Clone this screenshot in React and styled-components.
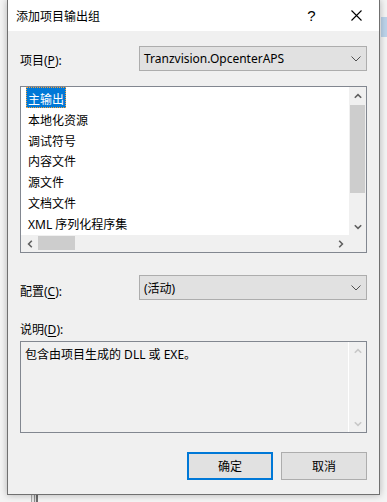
import React from 'react';
import styled, { createGlobalStyle } from 'styled-components';

const Global = createGlobalStyle`
    html, body {
        margin: 0;
        padding: 0;
    }
    body {
        overflow: hidden;
        background: #f4f4f4;
        font-family: "Segoe UI", "Noto Sans", "Noto Sans CJK SC", sans-serif;
        font-size: 12px;
        color: #000;
    }
`;

const Desktop = styled.div`
    width: 387px;
    height: 502px;
    overflow: hidden;
    display: flex;
    align-items: flex-start;
    background:
        linear-gradient(#bcd3ea, #bcd3ea) 381px 17px / 6px 20px no-repeat,
        linear-gradient(90deg, #a8a8a8 0 1px, #e6e6e6 1px 3px, #8c8c8c 3px 4px, #dadada 4px 5px, #6c6c6c 5px 7px) 31px 495px / 7px 7px no-repeat,
        #f4f4f4;
`;

const Dialog = styled.div`
    margin-left: 7px;
    width: 373px;
    height: 495px;
    box-sizing: border-box;
    border: 1px solid #707070;
    border-top: none;
    background: #f0f0f0;
    box-shadow: 0 0 7px rgba(0, 0, 0, 0.28);
    display: flex;
    flex-direction: column;
`;

const TitleBar = styled.div`
    height: 31px;
    flex-shrink: 0;
    background: #fff;
    display: flex;
    align-items: center;
    padding-left: 8px;
`;

const Title = styled.div`
    flex: 1;
    font-size: 12px;
`;

const CaptionButton = styled.div`
    width: 46px;
    height: 31px;
    display: flex;
    align-items: center;
    justify-content: center;
    font-size: 15px;
    font-family: "Segoe UI", "Liberation Sans", sans-serif;
    padding-left: ${p => p.$nudge || 0}px;
    box-sizing: border-box;
`;

const Body = styled.div`
    flex: 1;
    display: flex;
    flex-direction: column;
    padding: 15px 12px 14px 12px;
`;

const FieldRow = styled.div`
    display: flex;
    align-items: center;
    height: 25px;
    margin-top: ${p => p.$top || 0}px;
`;

const Label = styled.div`
    width: 119px;
    padding-top: ${p => p.$offset || 3}px;
    u {
        text-decoration: underline;
        text-underline-offset: 2px;
    }
`;

const Combo = styled.div`
    flex: 1;
    height: 25px;
    box-sizing: border-box;
    border: 1px solid #adadad;
    background: #e1e1e1;
    display: flex;
    align-items: center;
    padding: 0 5px 0 4px;
`;

const ComboText = styled.div`
    flex: 1;
`;

const ListBox = styled.div`
    margin-top: 15px;
    height: 167px;
    box-sizing: border-box;
    border: 1px solid #828790;
    background: #fff;
    display: grid;
    grid-template-columns: 1fr 17px;
    grid-template-rows: 1fr 17px;
`;

const Items = styled.div`
    padding: 0 0 0 5px;
    overflow: hidden;
`;

const Item = styled.div`
    height: 20.8px;
    white-space: nowrap;
`;

const ItemText = styled.span`
    display: inline-block;
    line-height: 17px;
    padding: 4px 2px 0;
    color: ${p => (p.$selected ? '#fff' : '#000')};
    background: ${p => (p.$selected ? '#0078d7' : 'transparent')};
    outline: ${p => (p.$selected ? '1px dotted #f7a23c' : 'none')};
    outline-offset: -1px;
`;

const VScroll = styled.div`
    background: #f0f0f0;
    display: flex;
    flex-direction: column;
`;

const HScroll = styled.div`
    background: #f0f0f0;
    display: flex;
`;

const Corner = styled.div`
    background: #f0f0f0;
`;

const ArrowButton = styled.div`
    width: 17px;
    height: 17px;
    flex-shrink: 0;
    display: flex;
    align-items: center;
    justify-content: center;
`;

const Track = styled.div`
    flex: 1;
    display: flex;
    flex-direction: ${p => (p.$vertical ? 'column' : 'row')};
    padding: ${p => (p.$vertical ? '1px 1px' : '1px 0')};
`;

const Thumb = styled.div`
    background: #cdcdcd;
    ${p => (p.$vertical ? 'height: 88px;' : 'width: 37px; height: 14px;')}
`;

const DescLabel = styled.div`
    margin-top: 22px;
    line-height: 16px;
    u {
        text-decoration: underline;
        text-underline-offset: 2px;
    }
`;

const DescBox = styled.div`
    margin-top: 3px;
    height: 92px;
    box-sizing: border-box;
    border: 1px solid #828790;
    background: #f0f0f0;
    display: grid;
    grid-template-columns: 1fr 18px;
`;

const DescText = styled.div`
    padding: 5px 4px;
    line-height: 16px;
`;

const DisabledScroll = styled.div`
    border-left: 1px solid #fff;
    display: flex;
    flex-direction: column;
    justify-content: space-between;
`;

const ButtonRow = styled.div`
    margin-top: auto;
    display: flex;
    justify-content: flex-end;
    gap: 8px;
`;

const Button = styled.div`
    width: 86px;
    height: 28px;
    box-sizing: border-box;
    border: ${p => (p.$primary ? '2px solid #0078d7' : '1px solid #adadad')};
    background: #e1e1e1;
    display: flex;
    align-items: center;
    justify-content: center;
`;

const rotations = { up: 180, down: 0, left: 90, right: -90 };

const ScrollArrow = ({ dir, color = '#606060' }) => (
    <svg width="8" height="8" viewBox="0 0 8 8" style={{ transform: `rotate(${rotations[dir]}deg)` }}>
        <polyline points="0.8,2.2 4,5.4 7.2,2.2" fill="none" stroke={color} strokeWidth="1.6" />
    </svg>
);

const ComboChevron = () => (
    <svg width="10" height="6" viewBox="0 0 10 6">
        <polyline points="0.5,0.5 5,5 9.5,0.5" fill="none" stroke="#505050" strokeWidth="1" />
    </svg>
);

const CloseIcon = () => (
    <svg width="11" height="11" viewBox="0 0 11 11">
        <path d="M0.5 0.5 L10.5 10.5 M10.5 0.5 L0.5 10.5" stroke="#000" strokeWidth="1.1" />
    </svg>
);

const items = ['主输出', '本地化资源', '调试符号', '内容文件', '源文件', '文档文件', 'XML 序列化程序集'];

const App = () => {
    return (
        <Desktop>
            <Global />
            <Dialog>
                <TitleBar>
                    <Title>添加项目输出组</Title>
                    <CaptionButton $nudge={3}>?</CaptionButton>
                    <CaptionButton><CloseIcon /></CaptionButton>
                </TitleBar>
                <Body>
                    <FieldRow>
                        <Label $offset={3}>项目(<u>P</u>):</Label>
                        <Combo>
                            <ComboText>Tranzvision.OpcenterAPS</ComboText>
                            <ComboChevron />
                        </Combo>
                    </FieldRow>

                    <ListBox>
                        <Items>
                            {items.map((item, i) => (
                                <Item key={item}>
                                    <ItemText $selected={i === 0}>{item}</ItemText>
                                </Item>
                            ))}
                        </Items>
                        <VScroll>
                            <ArrowButton><ScrollArrow dir="up" /></ArrowButton>
                            <Track $vertical>
                                <Thumb $vertical />
                            </Track>
                            <ArrowButton><ScrollArrow dir="down" /></ArrowButton>
                        </VScroll>
                        <HScroll>
                            <ArrowButton><ScrollArrow dir="left" /></ArrowButton>
                            <Track>
                                <Thumb />
                            </Track>
                            <ArrowButton><ScrollArrow dir="right" /></ArrowButton>
                        </HScroll>
                        <Corner />
                    </ListBox>

                    <FieldRow $top={22}>
                        <Label $offset={7}>配置(<u>C</u>):</Label>
                        <Combo>
                            <ComboText>(活动)</ComboText>
                            <ComboChevron />
                        </Combo>
                    </FieldRow>

                    <DescLabel>说明(<u>D</u>):</DescLabel>
                    <DescBox>
                        <DescText>包含由项目生成的 DLL 或 EXE。</DescText>
                        <DisabledScroll>
                            <ArrowButton><ScrollArrow dir="up" color="#c8c8c8" /></ArrowButton>
                            <ArrowButton><ScrollArrow dir="down" color="#c8c8c8" /></ArrowButton>
                        </DisabledScroll>
                    </DescBox>

                    <ButtonRow>
                        <Button $primary>确定</Button>
                        <Button>取消</Button>
                    </ButtonRow>
                </Body>
            </Dialog>
        </Desktop>
    );
};

export default App;
